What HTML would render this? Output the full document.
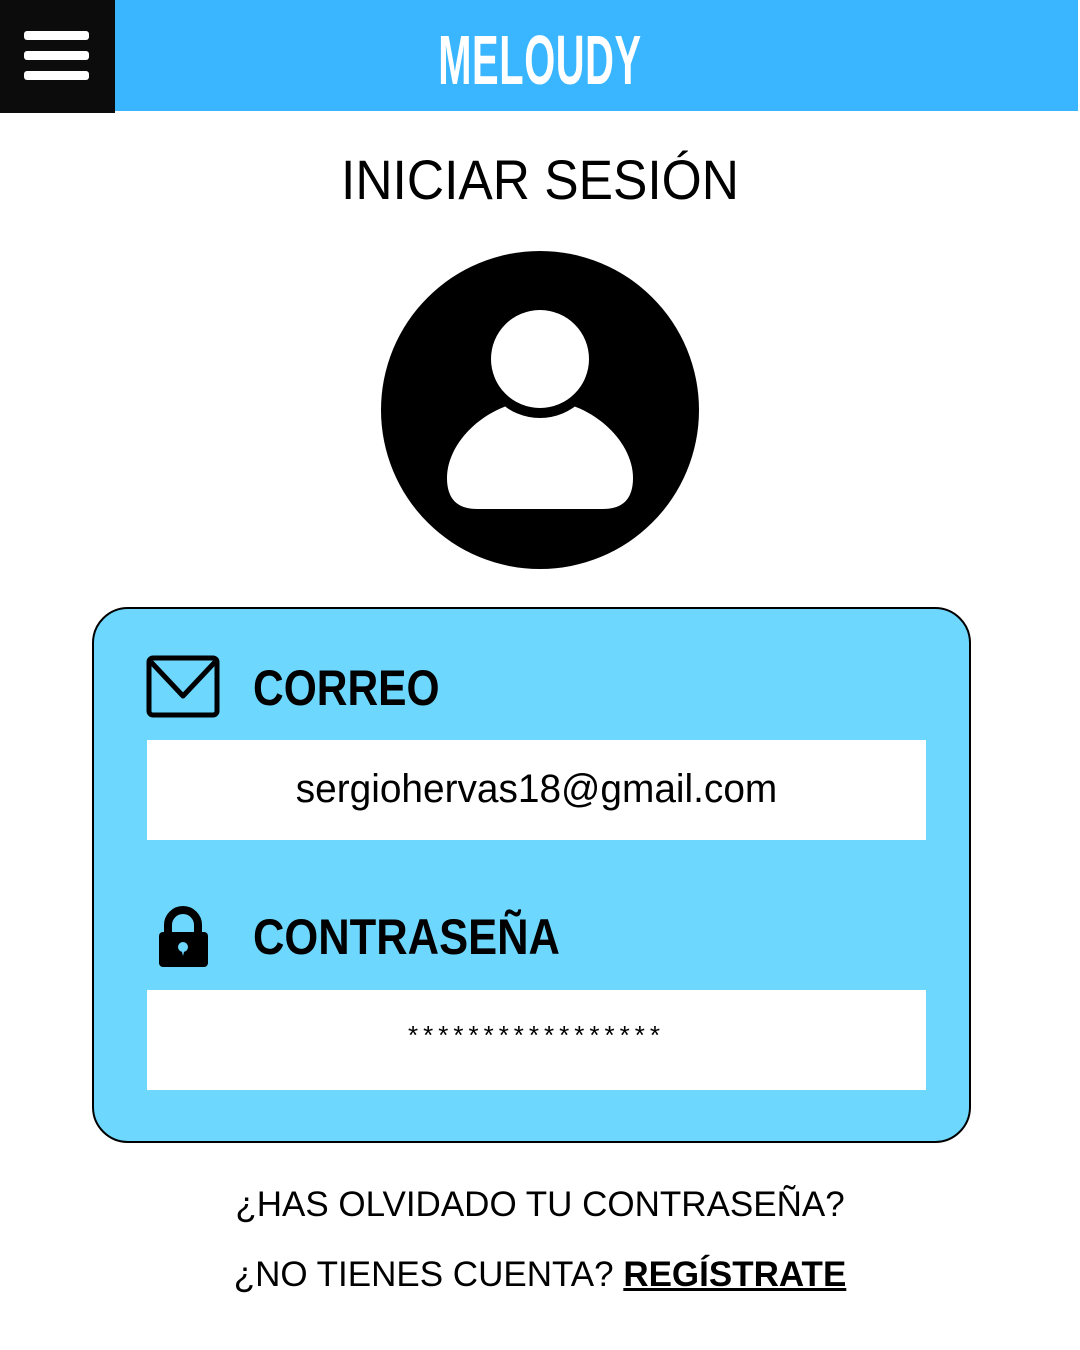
<!DOCTYPE html>
<html><head><meta charset="utf-8"><style>
html,body{margin:0;padding:0}
body{width:1080px;height:1350px;background:#fff;position:relative;overflow:hidden;font-family:"Liberation Sans",sans-serif}
.abs{position:absolute}
</style></head><body>
<div class="abs" style="left:115px;top:0;width:963px;height:111px;background:#39b6ff"></div>
<div class="abs" style="left:0;top:0;width:115px;height:113px;background:#0c0c0c"></div>
<div class="abs" style="left:24px;top:31px;width:65px;height:9px;background:#fff;border-radius:3px"></div>
<div class="abs" style="left:24px;top:51px;width:65px;height:9px;background:#fff;border-radius:3px"></div>
<div class="abs" style="left:24px;top:71px;width:65px;height:9px;background:#fff;border-radius:3px"></div>
<div class="abs" style="left:340px;top:22px;width:400px;text-align:center;color:#fff;font-weight:bold;font-size:70px;line-height:76px;transform:scaleX(0.57);letter-spacing:1px">MELOUDY</div>
<div class="abs" style="left:0;top:145px;width:1080px;text-align:center;font-size:56px;line-height:70px;color:#000;transform:scaleX(0.92)">INICIAR SESIÓN</div>
<svg class="abs" style="left:0;top:0" width="1080" height="1350">
<circle cx="540" cy="410" r="159" fill="#000"/>
<path d="M477,509 Q447,509 447,478 C447,440 490,400 540,400 C590,400 633,440 633,478 Q633,509 603,509 Z" fill="#fff"/>
<circle cx="540" cy="359" r="59" fill="#000"/>
<circle cx="540" cy="359" r="49" fill="#fff"/>
<rect x="93" y="608" width="877" height="534" rx="35" fill="#6dd7fe" stroke="#000" stroke-width="2"/>
<rect x="149" y="658" width="68" height="57" rx="4" fill="none" stroke="#000" stroke-width="5"/>
<path d="M151,662 L183,696 L215,662" fill="none" stroke="#000" stroke-width="5" stroke-linejoin="round"/>
<path d="M168,936 V925 A15,15 0 0 1 198,925 V936" fill="none" stroke="#000" stroke-width="8"/>
<rect x="159" y="932" width="49" height="35" rx="4" fill="#000"/>
<circle cx="183" cy="947" r="5" fill="#6dd7fe"/>
<path d="M181,948 L183,956 L185,948 Z" fill="#6dd7fe"/>
<rect x="147" y="740" width="779" height="100" fill="#fff"/>
<rect x="147" y="990" width="779" height="100" fill="#fff"/>
</svg>
<div class="abs" style="left:253px;top:660px;font-weight:bold;font-size:50px;line-height:56px;transform:scaleX(0.85);transform-origin:0 0">CORREO</div>
<div class="abs" style="left:253px;top:909px;font-weight:bold;font-size:50px;line-height:56px;transform:scaleX(0.87);transform-origin:0 0">CONTRASEÑA</div>
<div class="abs" style="left:147px;top:764px;width:779px;text-align:center;font-size:40px;line-height:50px;transform:scaleX(0.97)">sergiohervas18@gmail.com</div>
<div class="abs" style="left:147px;top:1020px;width:779px;text-align:center;font-size:26px;line-height:30px;letter-spacing:5px">*****************</div>
<div class="abs" style="left:0;top:1183px;width:1080px;text-align:center;font-size:35px;line-height:44px">¿HAS OLVIDADO TU CONTRASEÑA?</div>
<div class="abs" style="left:0;top:1253px;width:1080px;text-align:center;font-size:35px;line-height:44px">¿NO TIENES CUENTA? <b style="text-decoration:underline">REGÍSTRATE</b></div>
</body></html>
